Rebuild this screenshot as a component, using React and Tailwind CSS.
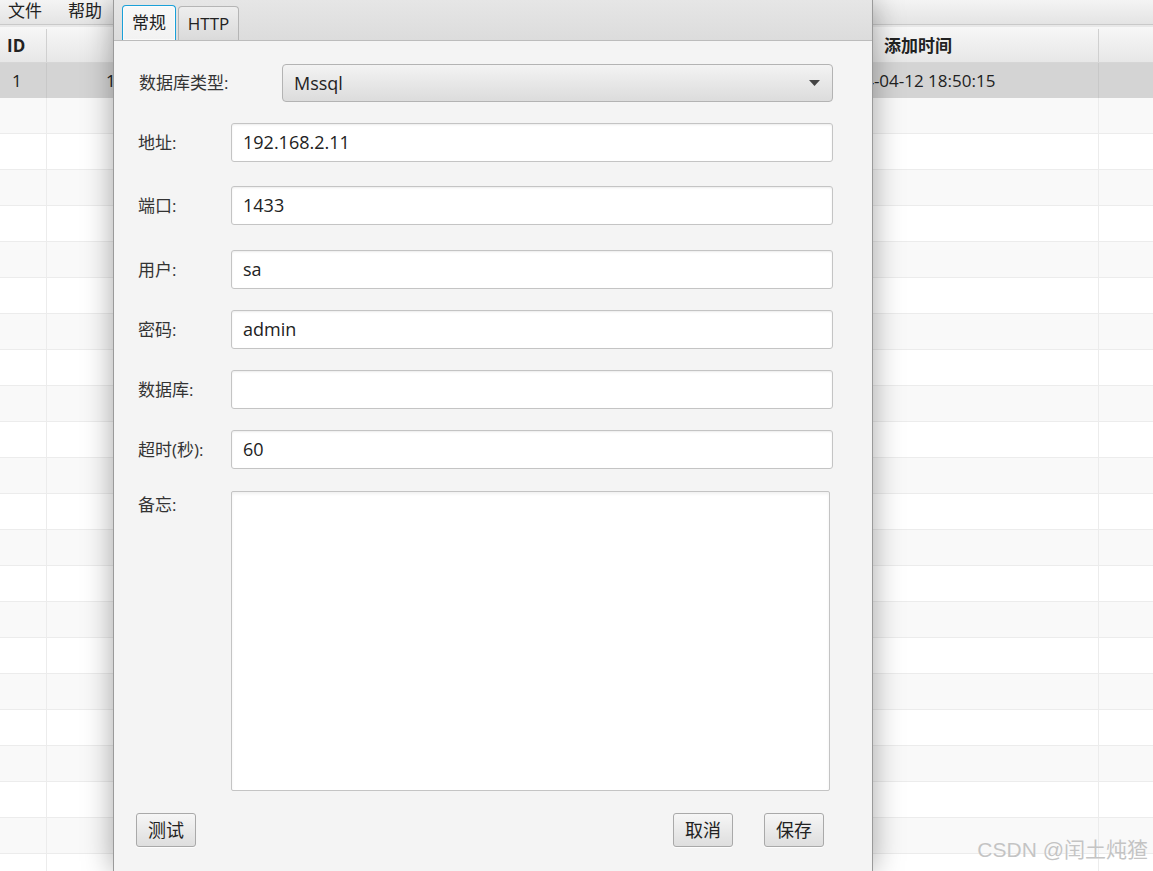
import React from 'react'

const font = { fontFamily: '"Open Sans", "Noto Sans CJK SC", sans-serif' }

const rows = Array.from({ length: 22 }, (_, i) => i)

const Field = ({ label, value, top }) => (
  <div className={`flex items-center ${top}`}>
    <div className="w-[93px] shrink-0 text-[17px] text-[#333]">{label}</div>
    <div className="h-[39px] w-[602px] flex items-center rounded-[3px] border border-[#c4c4c4] bg-white pl-[11px] text-[18px] text-[#222] shadow-[inset_0_1px_2px_rgba(0,0,0,0.08)]">
      {value}
    </div>
  </div>
)

const Btn = ({ children, className = '' }) => (
  <button className={`h-[34px] w-[60px] rounded-[3px] border border-[#a9a9a9] bg-gradient-to-b from-[#f6f6f6] to-[#dedede] text-[18px] text-[#222] shadow-[0_1px_0_rgba(255,255,255,0.8)] ${className}`}>
    {children}
  </button>
)

export default function App() {
  return (
    <div className="relative h-[871px] w-[1153px] overflow-hidden bg-white" style={font}>
      {/* background window */}
      <div className="flex h-[25px] items-start gap-[26px] border-b border-[#c9c9c9] bg-gradient-to-b from-[#f4f4f4] to-[#e4e4e4] pl-[8px] text-[17px] leading-[22px] text-[#222]">
        <span>文件</span>
        <span>帮助</span>
      </div>
      <div className="h-[2px] bg-[#e8e8e8]" />
      <div className="flex h-[36px] border-b border-[#d6d6d6] bg-gradient-to-b from-[#f7f7f7] to-[#e7e7e7] pt-[2px] text-[17px] font-bold text-[#222]">
        <div className="flex w-[47px] items-center border-r border-[#d0d0d0] pl-[7px]">ID</div>
        <div className="w-[787px] border-r border-[#d0d0d0]" />
        <div className="flex w-[265px] items-center border-r border-[#d0d0d0] pl-[50px]">添加时间</div>
        <div className="flex-1" />
      </div>
      <div className="flex h-[35px] bg-[#d4d4d4] text-[17px] text-[#222]">
        <div className="flex w-[47px] items-center border-r border-[#c8c8c8] pl-[12px]">1</div>
        <div className="flex w-[787px] items-center border-r border-[#c8c8c8] pl-[59px]">1</div>
        <div className="flex w-[265px] items-center border-r border-[#c8c8c8] pl-[1px]">2024-04-12 18:50:15</div>
        <div className="flex-1" />
      </div>
      {rows.map((i) => (
        <div key={i} className={`flex h-[36px] border-b border-[#ececec] ${i % 2 === 0 ? 'bg-[#f9f9f9]' : 'bg-white'}`}>
          <div className="w-[47px] border-r border-[#ececec]" />
          <div className="w-[787px] border-r border-[#ececec]" />
          <div className="w-[265px] border-r border-[#ececec]" />
          <div className="flex-1" />
        </div>
      ))}

      {/* dialog */}
      <div className="absolute left-[113px] top-0 flex h-[871px] w-[760px] flex-col border-x border-[#9a9a9a] bg-[#f4f4f4] shadow-[0_0_28px_rgba(0,0,0,0.35)]">
        <div className="flex h-[41px] items-end gap-[2px] border-b border-[#bcbcbc] bg-gradient-to-b from-[#e6e6e6] to-[#dcdcdc] pl-[8px]">
          <div className="flex h-[35px] w-[54px] items-center justify-center rounded-t-[4px] border border-b-0 border-[#1aa0d8] bg-gradient-to-b from-[#f8f8f8] to-[#f2f2f2] text-[17px] text-[#222] shadow-[inset_0_0_0_1px_rgba(255,255,255,0.6)]">
            常规
          </div>
          <div className="flex h-[34px] w-[61px] items-center justify-center rounded-t-[4px] border border-b-0 border-[#b5b5b5] bg-gradient-to-b from-[#eeeeee] to-[#dadada] text-[17px] text-[#222]">
            HTTP
          </div>
        </div>

        <div className="flex flex-col pl-[24px]">
          <div className="mt-[23px] flex items-center">
            <div className="w-[144px] shrink-0 pl-[1px] text-[17px] text-[#333]">数据库类型:</div>
            <div className="flex h-[38px] w-[551px] items-center justify-between rounded-[4px] border border-[#b3b3b3] bg-gradient-to-b from-[#f3f3f3] to-[#dcdcdc] pl-[11px] pr-[12px] text-[18px] text-[#222]">
              <span>Mssql</span>
              <svg width="11" height="6" viewBox="0 0 11 6"><path d="M0 0h11L5.5 6z" fill="#444" /></svg>
            </div>
          </div>
          <Field label="地址:" value="192.168.2.11" top="mt-[21px]" />
          <Field label="端口:" value="1433" top="mt-[24px]" />
          <Field label="用户:" value="sa" top="mt-[25px]" />
          <Field label="密码:" value="admin" top="mt-[21px]" />
          <Field label="数据库:" value="" top="mt-[21px]" />
          <Field label="超时(秒):" value="60" top="mt-[21px]" />
          <div className="mt-[22px] flex items-start">
            <div className="w-[93px] shrink-0 pt-[1px] text-[17px] text-[#333]">备忘:</div>
            <div className="h-[300px] w-[599px] rounded-[2px] border border-[#c4c4c4] bg-white shadow-[inset_0_2px_3px_rgba(0,0,0,0.06)]" />
          </div>
          <div className="mt-[22px] flex items-center pr-[48px]">
            <Btn className="-ml-[2px]">测试</Btn>
            <div className="flex-1" />
            <Btn>取消</Btn>
            <Btn className="ml-[31px]">保存</Btn>
          </div>
        </div>
      </div>

      {/* watermark */}
      <div className="absolute bottom-[6px] right-[5px] text-[21px] text-[#c4c4c4] [text-shadow:0_0_1px_#fff]" style={{ fontFamily: '"Liberation Sans", "Noto Sans CJK SC", sans-serif' }}>
        CSDN @闰土炖猹
      </div>
    </div>
  )
}
